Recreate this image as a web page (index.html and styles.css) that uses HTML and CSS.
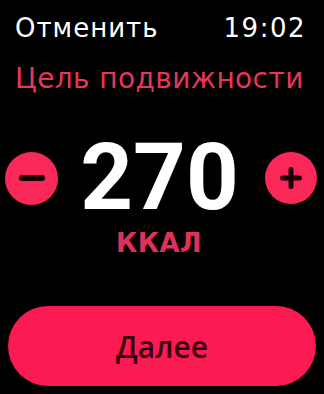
FILE: index.html
```html
<!DOCTYPE html>
<html lang="ru">
<head>
    <meta charset="UTF-8">
    <meta name="viewport" content="width=device-width, initial-scale=1.0">
    <link rel="stylesheet" href="styles.css">
    <title>Цель подвижности</title>
</head>
<body>
    <div id="header">
        <span id="cancel">Отменить</span>
        <span id="clock">19:02</span>
    </div>
    <h1 id="title">Цель подвижности</h1>

    <div id="stepper">
        <button class="round" id="minus">
            <svg width="26" height="6" viewBox="0 0 26 6"><rect x="0" y="0" width="26" height="6" rx="3" fill="#1a0006"/></svg>
        </button>
        <span id="value">270</span>
        <button class="round" id="plus">
            <svg width="22" height="22" viewBox="0 0 22 22"><rect x="0" y="8.5" width="22" height="5" rx="2.5" fill="#1a0006"/><rect x="8.5" y="0" width="5" height="22" rx="2.5" fill="#1a0006"/></svg>
        </button>
    </div>
    <div id="unit">ККАЛ</div>

    <button id="next">Далее</button>
</body>
</html>
```

FILE: styles.css
```css
body {
    background-color: #000;
    margin: 0;
    font-family: "DejaVu Sans", "Liberation Sans", sans-serif;
    width: 324px;
    height: 394px;
    overflow: hidden;
}

#header {
    display: flex;
    justify-content: space-between;
    align-items: baseline;
    padding: 11px 19px 0 15px;
    color: #fff;
    font-size: 26px;
    line-height: 34px;
    letter-spacing: 1px;
}

#clock {
    letter-spacing: 1.5px;
    margin-right: -1px;
}

#title {
    margin: 0;
    padding: 17px 0 0 15px;
    font-size: 28px;
    font-weight: normal;
    line-height: 34px;
    letter-spacing: 0.4px;
    color: #e6355e;
}

#stepper {
    display: flex;
    align-items: center;
    justify-content: space-between;
    padding: 42px 7px 0 5px;
}

.round {
    width: 53px;
    height: 53px;
    border: none;
    border-radius: 50%;
    background: #fa2858;
    padding: 0;
    display: flex;
    align-items: center;
    justify-content: center;
}

#plus {
    width: 52px;
    height: 52px;
}

#value {
    color: #fff;
    font-family: "Roboto", sans-serif;
    font-size: 92px;
    font-weight: 700;
    line-height: 80px;
    margin-left: -4px;
}

#unit {
    text-align: center;
    color: #e0305c;
    font-size: 26px;
    font-weight: 700;
    line-height: 30px;
    letter-spacing: 0.5px;
    margin-top: 10px;
    margin-left: -6px;
}

#next {
    display: block;
    margin: 48px 0 0 8px;
    width: 308px;
    height: 80px;
    border: none;
    border-radius: 40px;
    background: #fc1a52;
    color: #3a0010;
    font-family: "Open Sans", sans-serif;
    font-size: 30px;
    font-weight: 600;
}
```
